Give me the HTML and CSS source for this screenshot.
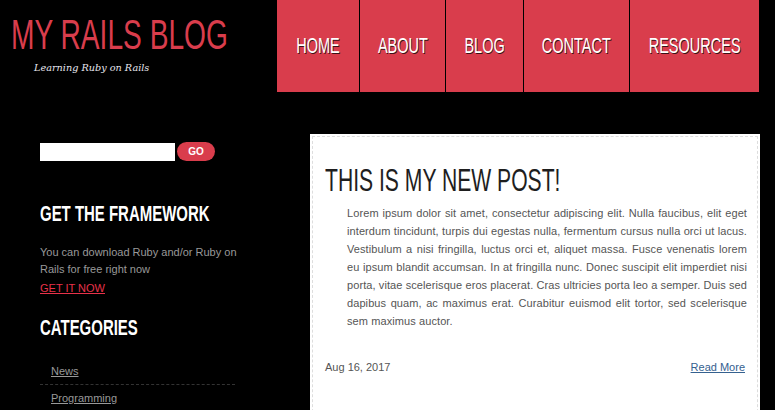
FILE: index.html
```html
<!DOCTYPE html>
<html>
<head>
<meta charset="utf-8">
<link rel="stylesheet" href="styles.css">
</head>
<body>
<header class="header">
  <div class="brand">
    <h1 class="logo">MY RAILS BLOG</h1>
    <p class="tagline">Learning Ruby on Rails</p>
  </div>
  <nav class="nav">
    <a class="nav-item" href="#"><span class="nav-text">HOME</span></a>
    <a class="nav-item" href="#"><span class="nav-text">ABOUT</span></a>
    <a class="nav-item" href="#"><span class="nav-text">BLOG</span></a>
    <a class="nav-item" href="#"><span class="nav-text">CONTACT</span></a>
    <a class="nav-item" href="#"><span class="nav-text">RESOURCES</span></a>
  </nav>
</header>
<div class="page">
  <aside class="sidebar">
    <form class="search">
      <input class="search-input" type="text">
      <button class="search-btn" type="button">GO</button>
    </form>
    <h2 class="side-title side-title-first">GET THE FRAMEWORK</h2>
    <p class="side-text">You can download Ruby and/or Ruby on Rails for free right now</p>
    <a class="side-link" href="#">GET IT NOW</a>
    <h2 class="side-title side-title-cats">CATEGORIES</h2>
    <ul class="cats">
      <li class="cat"><a href="#">News</a></li>
      <li class="cat"><a href="#">Programming</a></li>
    </ul>
  </aside>
  <main class="content">
    <article class="post">
      <h2 class="post-title">THIS IS MY NEW POST!</h2>
      <p class="post-body">Lorem ipsum dolor sit amet, consectetur adipiscing elit. Nulla faucibus, elit eget interdum tincidunt, turpis dui egestas nulla, fermentum cursus nulla orci ut lacus. Vestibulum a nisi fringilla, luctus orci et, aliquet massa. Fusce venenatis lorem eu ipsum blandit accumsan. In at fringilla nunc. Donec suscipit elit imperdiet nisi porta, vitae scelerisque eros placerat. Cras ultricies porta leo a semper. Duis sed dapibus quam, ac maximus erat. Curabitur euismod elit tortor, sed scelerisque sem maximus auctor.</p>
      <div class="post-meta">
        <span class="post-date">Aug 16, 2017</span>
        <a class="read-more" href="#">Read More</a>
      </div>
    </article>
  </main>
</div>
</body>
</html>
```
FILE: styles.css
```css
* { box-sizing: border-box; }
body {
  margin: 0;
  background: #000;
  font-family: "Liberation Sans", Arial, sans-serif;
  overflow: hidden;
}
.header {
  display: flex;
  height: 93px;
}
.brand {
  width: 277px;
  padding: 14px 0 0 11px;
}
.logo {
  margin: 0;
  font-family: "Liberation Sans", Arial, sans-serif;
  font-weight: normal;
  font-size: 42px;
  line-height: 42px;
  color: #d93d4c;
  white-space: nowrap;
  transform: scaleX(0.67);
  transform-origin: left center;
}
.tagline {
  margin: 6px 0 0 23px;
  font-family: "DejaVu Serif", "Liberation Serif", serif;
  font-style: italic;
  font-size: 9.7px;
  line-height: 12px;
  color: #e6e6ee;
}
.nav {
  display: grid;
  grid-template-columns: 82px 85px 77px 105px 129px;
  gap: 1px;
  height: 92px;
  background: #000;
}
.nav-item {
  display: flex;
  align-items: center;
  justify-content: center;
  background: #d93d4c;
  color: #fff;
  text-decoration: none;
  font-family: "Liberation Sans", Arial, sans-serif;
  font-size: 22px;
  white-space: nowrap;
}
.nav-text {
  display: inline-block;
  transform: scaleX(0.66);
  text-shadow: 1px 1px 0 #3a1015;
}
.page {
  display: flex;
  padding-top: 41px;
}
.sidebar {
  width: 310px;
  padding: 8px 70px 0 40px;
}
.search {
  display: flex;
  align-items: center;
  gap: 2px;
  margin: 0;
}
.search-input {
  width: 135px;
  height: 18px;
  border: 0;
  margin: 0;
  padding: 0;
  background: #fff;
}
.search-btn {
  width: 38px;
  height: 19px;
  border: 0;
  border-radius: 10px;
  background: #d93d4c;
  color: #fff;
  font-family: "Liberation Sans", Arial, sans-serif;
  font-weight: bold;
  font-size: 10px;
  padding: 0;
}
.side-title {
  margin: 0;
  font-family: "Liberation Sans", Arial, sans-serif;
  font-weight: bold;
  font-size: 22px;
  line-height: 26px;
  color: #fff;
  white-space: nowrap;
  transform: scaleX(0.68);
  transform-origin: left center;
}
.side-title-first { margin-top: 40px; }
.side-title-cats { margin-top: 20px; }
.side-text {
  margin: 17px 0 0;
  font-size: 11px;
  line-height: 17px;
  color: #999;
}
.side-link {
  display: block;
  margin-top: 3px;
  font-size: 11px;
  line-height: 14px;
  color: #e8324a;
  text-decoration: underline;
}
.cats {
  list-style: none;
  margin: 17px 0 0;
  padding: 0;
  width: 195px;
}
.cat {
  padding: 6px 11px 6px;
  border-bottom: 1px dashed #333;
  font-size: 11px;
  line-height: 14px;
}
.cat a { color: #999; }
.content {
  width: 450px;
}
.post {
  position: relative;
  background: #fff;
  padding: 2px;
  height: 300px;
}
.post::before {
  content: "";
  position: absolute;
  inset: 2px;
  border: 1px dashed #ddd;
  pointer-events: none;
}
.post-title {
  margin: 26px 0 0 13px;
  font-family: "Liberation Sans", Arial, sans-serif;
  font-weight: normal;
  font-size: 32px;
  line-height: 36px;
  color: #1e1e1e;
  white-space: nowrap;
  transform: scaleX(0.66);
  transform-origin: left center;
}
.post-body {
  margin: 6px 11px 0 35px;
  font-size: 11px;
  line-height: 18px;
  color: #555;
  text-align: justify;
  letter-spacing: 0.09px;
}
.post-meta {
  display: flex;
  justify-content: space-between;
  margin: 31px 13px 0 13px;
  font-size: 11px;
  color: #555;
}
.read-more { color: #35618f; }
```
